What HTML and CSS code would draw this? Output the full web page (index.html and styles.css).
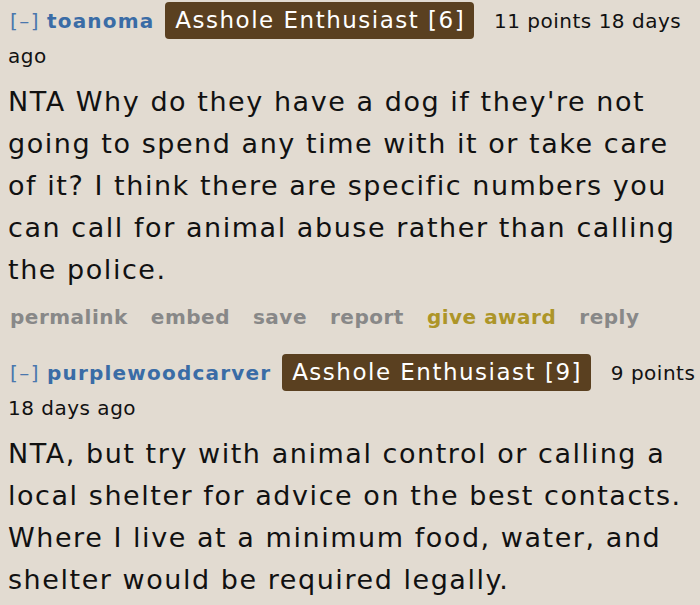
FILE: index.html
```html
<!DOCTYPE html>
<html>
<head>
<meta charset="utf-8">
<link rel="stylesheet" href="styles.css">
</head>
<body>
<div class="comment">
  <p class="tagline"><span class="expand">[–]</span> <span class="author">toanoma</span> <span class="flair">Asshole Enthusiast [6]</span> <span class="meta">11 points 18 days ago</span></p>
  <div class="md">NTA Why do they have a dog if they're not going to spend any time with it or take care of it? I think there are specific numbers you can call for animal abuse rather than calling the police.</div>
  <ul class="buttons">
    <li>permalink</li>
    <li>embed</li>
    <li>save</li>
    <li>report</li>
    <li class="gild">give award</li>
    <li>reply</li>
  </ul>
</div>
<div class="comment">
  <p class="tagline"><span class="expand">[–]</span> <span class="author">purplewoodcarver</span> <span class="flair">Asshole Enthusiast [9]</span> <span class="meta">9 points 18 days ago</span></p>
  <div class="md">NTA, but try with animal control or calling a local shelter for advice on the best contacts. Where I live at a minimum food, water, and shelter would be required legally.</div>
</div>
</body>
</html>
```
FILE: styles.css
```css
html, body {
  margin: 0;
  padding: 0;
  background: #e2dbd1;
}
body {
  padding: 0 8px;
  font-family: "DejaVu Sans", Verdana, sans-serif;
  color: #111;
  overflow: hidden;
}
.tagline {
  margin: 0 -7px 0 0;
  padding-top: 2px;
  font-size: 20px;
  line-height: 34px;
  letter-spacing: 0.5px;
}
.expand {
  color: #4a77ad;
  letter-spacing: 1.5px;
  margin-left: 2px;
}
.author {
  color: #3a6ca6;
  font-weight: bold;
  letter-spacing: 1.2px;
}
.flair {
  display: inline-block;
  background: #5a4020;
  color: #fff;
  font-size: 23px;
  line-height: 37px;
  letter-spacing: 1.5px;
  padding: 0 9px 0 10px;
  border-radius: 4px;
  margin: 0 13px 0 4px;
}
.meta {
  color: #111;
}
.md {
  font-size: 27px;
  line-height: 42px;
  letter-spacing: 1.55px;
  margin-top: 8px;
}
.buttons {
  list-style: none;
  margin: 6px 0 0 2px;
  padding: 0;
  display: flex;
  gap: 23px;
  font-size: 20px;
  font-weight: bold;
  letter-spacing: 0.5px;
  color: #888;
  line-height: 40px;
}
.buttons .gild {
  color: #ad9528;
}
.comment + .comment {
  margin-top: 15px;
}
```
